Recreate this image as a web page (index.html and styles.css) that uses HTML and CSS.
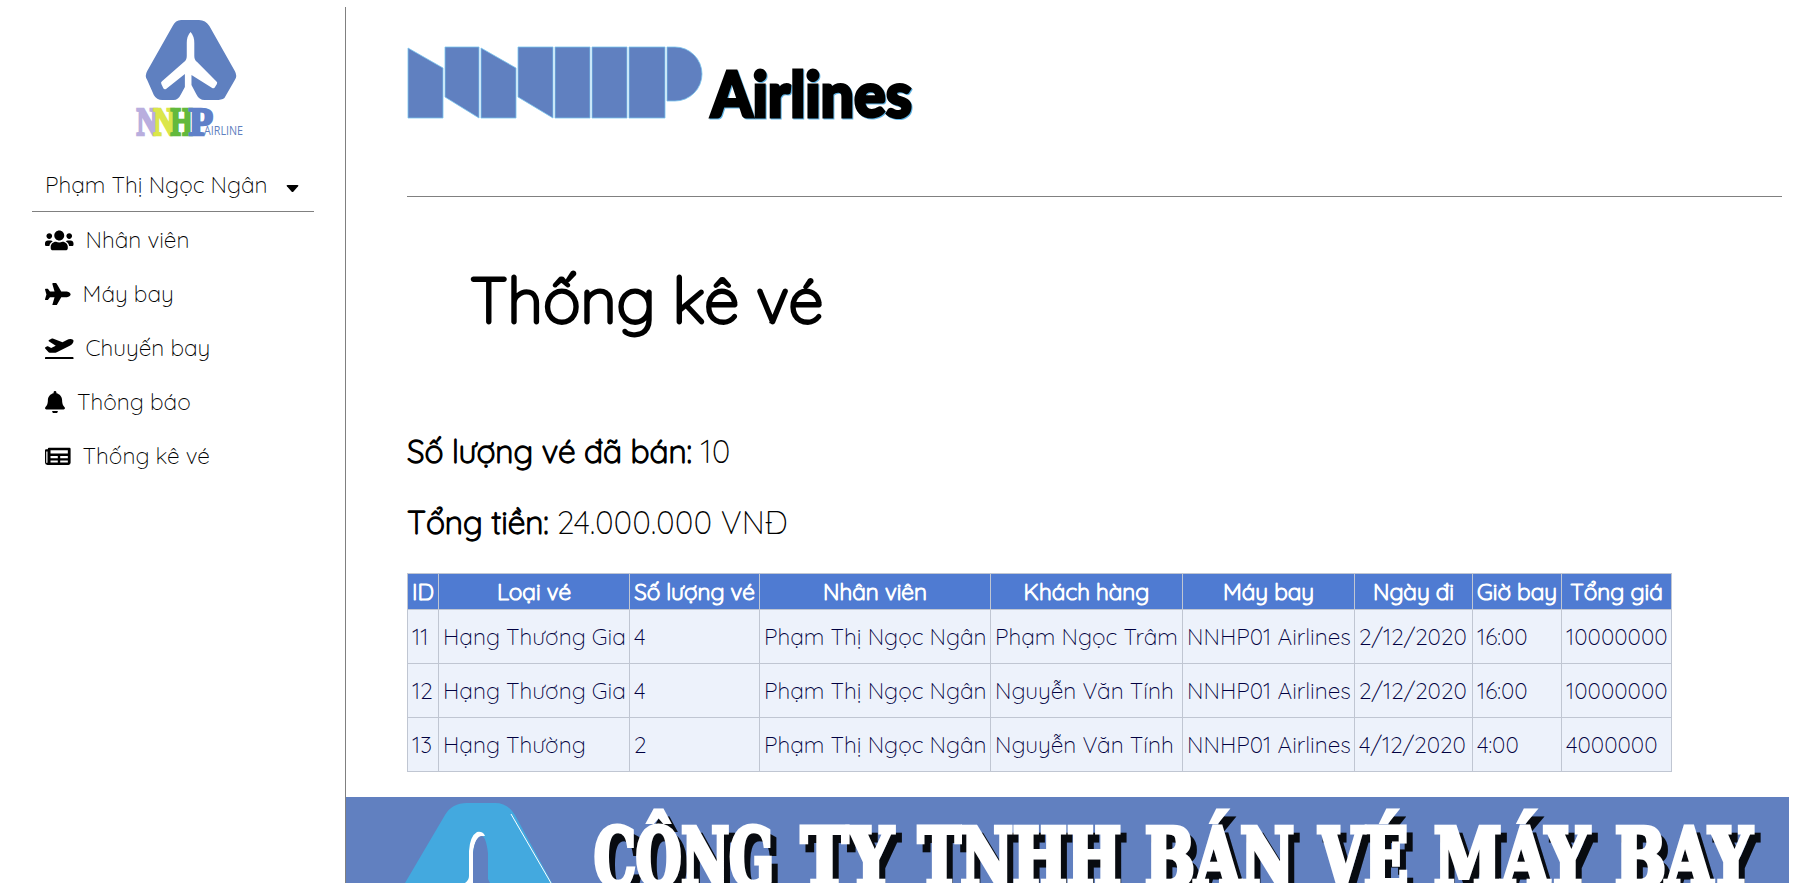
FILE: index.html
```html
<!DOCTYPE html>
<html lang="vi">
<head>
<meta charset="utf-8">
<title>NNHP Airlines</title>
<link rel="stylesheet" href="styles.css">
</head>
<body>
<div class="layout">
  <aside class="sidebar">
    <svg class="logo" viewBox="0 0 120 125" role="img" aria-label="NNHP Airline">
      <path transform="translate(.9 0) scale(.942 1)" fill="#5f80c0" d="M48 5h19q7 0 11 6l27 45q3 5 0 9l-11 18q-3 2-9 2h-12q-6 0-9-6l-5-9V60l22 13q2 1 3-1l2-3q1-2-1-3L65 47q-3-2-3-6V28q0-7-4-11q-4 4-4 11v13q0 4-3 6L28 66q-2 1-1 3l2 4q1 2 3 1l20-15v13l-4 7q-3 6-8 6H28q-6 0-9-5L12 65q-3-4 0-9l27-45q3-6 9-6z"/>
      <g class="logo-word">
        <text x="1.500" y="119.500" textLength="21" lengthAdjust="spacingAndGlyphs" fill="#b9aede" stroke="#b9aede">N</text>
        <text x="18.500" y="119.500" textLength="21" lengthAdjust="spacingAndGlyphs" fill="#dbe64a" stroke="#dbe64a">N</text>
        <text x="35.500" y="119.500" textLength="22" lengthAdjust="spacingAndGlyphs" fill="#63b93c" stroke="#63b93c">H</text>
        <text x="54" y="119.500" textLength="24" lengthAdjust="spacingAndGlyphs" fill="#5f80c8" stroke="#5f80c8">P</text>
      </g>
      <text class="logo-sub" x="69" y="119.700" textLength="39" lengthAdjust="spacingAndGlyphs">AIRLINE</text>
    </svg>
    <div class="user"><span>Phạm Thị Ngọc Ngân</span><svg class="caret" viewBox="0 0 12 7"><path d="M1 0h10q1.600 0 .6 1.300L7 6.400q-1 1-2 0L.4 1.300Q-.6 0 1 0z"/></svg></div>
    <nav class="menu">
      <a class="item"><svg class="icon wide" viewBox="0 0 640 512"><path d="M96 224c35.300 0 64-28.700 64-64s-28.700-64-64-64-64 28.700-64 64 28.700 64 64 64zm448 0c35.300 0 64-28.700 64-64s-28.700-64-64-64-64 28.700-64 64 28.700 64 64 64zm32 32h-64c-17.600 0-33.500 7.100-45.100 18.600 40.300 22.100 68.900 62 75.100 109.400h66c17.700 0 32-14.300 32-32v-32c0-35.300-28.700-64-64-64zm-256 0c61.900 0 112-50.100 112-112S381.900 32 320 32 208 82.100 208 144s50.100 112 112 112zm76.800 32h-8.300c-20.800 10-43.900 16-68.500 16s-47.600-6-68.500-16h-8.300C179.600 288 128 339.600 128 403.200V432c0 26.500 21.500 48 48 48h288c26.500 0 48-21.500 48-48v-28.800c0-63.600-51.600-115.200-115.200-115.200zm-223.700-13.400C161.500 263.100 145.600 256 128 256H64c-35.300 0-64 28.700-64 64v32c0 17.700 14.300 32 32 32h65.900c6.300-47.400 34.900-87.300 75.200-109.400z"/></svg><span>Nhân viên</span></a>
      <a class="item"><svg class="icon mid" viewBox="0 0 576 512"><path d="M480 192H365.710L260.610 8.060A16.014 16.014 0 0 0 246.710 0h-65.500c-10.630 0-18.300 10.170-15.380 20.390L214.860 192H112l-43.200-57.600c-3.020-4.030-7.770-6.400-12.800-6.400H16.010C5.600 128-2.040 137.780.490 147.880L32 256 .490 364.120C-2.040 374.220 5.600 384 16.010 384H56c5.040 0 9.780-2.370 12.800-6.400L112 320h102.860l-49.030 171.600c-2.920 10.220 4.750 20.400 15.380 20.400h65.500c5.740 0 11.040-3.080 13.890-8.060L365.710 320H480c35.350 0 96-28.650 96-64s-60.650-64-96-64z"/></svg><span>Máy bay</span></a>
      <a class="item"><svg class="icon wide" viewBox="0 0 640 512"><path d="M624 448H16c-8.840 0-16 7.160-16 16v32c0 8.840 7.160 16 16 16h608c8.840 0 16-7.160 16-16v-32c0-8.840-7.160-16-16-16zM80.550 341.270c6.280 6.840 15.100 10.720 24.330 10.710l130.540-.18a65.620 65.620 0 0 0 29.640-7.120l290.960-147.650c26.740-13.570 50.710-32.940 67.020-58.310 18.310-28.480 20.300-49.090 13.070-63.650-7.210-14.570-24.740-25.270-58.250-27.450-29.850-1.940-59.540 5.920-86.280 19.480l-98.510 49.990-218.700-82.060a17.799 17.799 0 0 0-18-1.110L90.620 67.290c-10.670 5.410-13.250 19.650-5.170 28.530l156.220 98.100-103.210 52.380-72.350-36.470a17.804 17.804 0 0 0-16.070.02L9.910 230.220c-10.440 5.300-13.190 19.120-5.570 28.080l76.210 82.970z"/></svg><span>Chuyến bay</span></a>
      <a class="item"><svg class="icon slim" viewBox="0 0 448 512"><path d="M224 512c35.320 0 63.970-28.650 63.970-64H160.030c0 35.350 28.650 64 63.970 64zm215.390-149.710c-19.320-20.760-55.470-51.990-55.470-154.290 0-77.700-54.480-139.900-127.940-155.160V32c0-17.670-14.320-32-31.980-32s-31.980 14.330-31.980 32v20.840C118.560 68.100 64.080 130.300 64.080 208c0 102.300-36.150 133.530-55.470 154.290-6 6.450-8.660 14.160-8.610 21.710.11 16.400 12.980 32 32.100 32h383.800c19.120 0 32-15.600 32.100-32 .05-7.550-2.610-15.270-8.610-21.710z"/></svg><span>Thông báo</span></a>
      <a class="item"><svg class="icon mid" viewBox="0 0 576 512"><path fill-rule="evenodd" d="M88 64h464q24 0 24 24v312q0 48-48 48H56q-56 0-56-56V120q0-24 24-24h40v-8q0-24 24-24zM28 144v244q0 16 14 16t14-16V144zM124 116v76h390v-76zM124 248v48h164v-48zM342 248v48h172v-48zM124 348v48h164v-48zM342 348v48h172v-48z"/></svg><span>Thống kê vé</span></a>
    </nav>
  </aside>
  <main class="main">
    <header class="banner">
      <svg class="brand" viewBox="0 0 520 90" role="img" aria-label="NNHP Airlines">
        <g class="stripes">
          <path d="M1 7l35 20v50H1z"/><path d="M38 6h34v71L38 56z"/><path d="M74 7l35 20v50H74z"/><path d="M111 6h35v71l-35-21z"/>
          <path d="M148 6h35v71h-35z"/><path d="M185 6h35v71h-35z"/><path d="M222 6h36v71h-36z"/><path d="M260 6h8a27 27 0 0 1 0 54h-8z"/>
        </g>
        <text class="brand-text" x="304" y="75.500" textLength="201" lengthAdjust="spacingAndGlyphs">Airlines</text>
      </svg>
    </header>
    <section class="content">
      <h1 class="title">Thống kê vé</h1>
      <p class="stat"><b>Số lượng vé đã bán:</b> 10</p>
      <p class="stat"><b>Tổng tiền:</b> 24.000.000 VNĐ</p>
      <table class="tickets">
        <colgroup><col class="c1"><col class="c2"><col class="c3"><col class="c4"><col class="c5"><col class="c6"><col class="c7"><col class="c8"><col class="c9"></colgroup>
        <thead><tr><th>ID</th><th>Loại vé</th><th>Số lượng vé</th><th>Nhân viên</th><th>Khách hàng</th><th>Máy bay</th><th>Ngày đi</th><th>Giờ bay</th><th>Tổng giá</th></tr></thead>
        <tbody>
          <tr><td>11</td><td>Hạng Thương Gia</td><td>4</td><td>Phạm Thị Ngọc Ngân</td><td>Phạm Ngọc Trâm</td><td>NNHP01 Airlines</td><td>2/12/2020</td><td>16:00</td><td>10000000</td></tr>
          <tr><td>12</td><td>Hạng Thương Gia</td><td>4</td><td>Phạm Thị Ngọc Ngân</td><td>Nguyễn Văn Tính</td><td>NNHP01 Airlines</td><td>2/12/2020</td><td>16:00</td><td>10000000</td></tr>
          <tr><td>13</td><td>Hạng Thường</td><td>2</td><td>Phạm Thị Ngọc Ngân</td><td>Nguyễn Văn Tính</td><td>NNHP01 Airlines</td><td>4/12/2020</td><td>4:00</td><td>4000000</td></tr>
        </tbody>
      </table>
    </section>
    <footer class="footer">
      <svg class="footer-art" viewBox="0 0 1443 86">
        <path fill="#43a9df" d="M59 86L99 18q7-12 22-12h28q13 0 20 12l37 68z"/>
        <path fill="none" stroke="#fff" stroke-width="1" d="M165 17l40 69"/>
        <path fill="#fff" d="M119 86q4-3 4-7V54q1-15 8-19q6-1 8 4q-10-1-12 17v30z"/>
        <path fill="#6180c0" d="M127 86V56q2-17 9-17q4 1 6 17v26l2 4z"/>
        <g class="foot-text">
          <text x="248" y="89" textLength="180" lengthAdjust="spacingAndGlyphs">CÔNG</text>
          <text x="455" y="89" textLength="92" lengthAdjust="spacingAndGlyphs">TY</text>
          <text x="572" y="89" textLength="203" lengthAdjust="spacingAndGlyphs">TNHH</text>
          <text x="799" y="89" textLength="149" lengthAdjust="spacingAndGlyphs">BÁN</text>
          <text x="973" y="89" textLength="89" lengthAdjust="spacingAndGlyphs">VÉ</text>
          <text x="1088" y="89" textLength="155" lengthAdjust="spacingAndGlyphs">MÁY</text>
          <text x="1269" y="89" textLength="137" lengthAdjust="spacingAndGlyphs">BAY</text>
        </g>
      </svg>
    </footer>
  </main>
</div>
</body>
</html>
```

FILE: styles.css
```css
* { box-sizing: border-box; }
body { margin: 0; height: 883px; overflow: hidden; background: #fff; color: #000; font: 300 22.700px/30px Quicksand, Lato, sans-serif; }
.layout { display: flex; height: 883px; padding-top: 7px; }
.sidebar { width: 345px; padding: 8px 31px 0 32px; flex: none; }
.logo { display: block; width: 120px; height: 125px; margin-left: 103px; }
.logo-word text { font: bold 40px "Liberation Serif", serif; stroke-width: 2.500; }
.logo-sub { font: 12.500px "Open Sans", sans-serif; fill: #5f80c0; }
.user { height: 72px; padding: 30px 15px 0 13px; display: flex; justify-content: space-between; border-bottom: 1px solid #808080; }
.caret { width: 13px; height: 7px; margin-top: 15px; }
.menu { padding-top: 1px; }
.item { display: flex; align-items: center; height: 54px; padding-left: 13px; gap: 12px; }
.icon { height: 22.800px; flex: none; }
.wide { width: 28.500px; } .mid { width: 25.600px; } .slim { width: 20px; }
.main { width: 1444px; border-left: 1px solid #808080; display: flex; flex-direction: column; }
.banner { height: 190px; margin: 0 7px 0 61px; border-bottom: 1px solid #808080; padding-top: 34px; }
.brand { display: block; width: 520px; height: 90px; }
.stripes { fill: #6080c0; stroke: #79c4ee; stroke-width: .8; }
.brand-text { font: 900 63px Lato, sans-serif; stroke: #000; stroke-width: 3; paint-order: stroke; filter: drop-shadow(1.500px 1.500px 0 #5fb4e6); }
.content { padding-left: 61px; height: 600px; }
.title { margin: 63px 0 0 63px; font-size: 63px; line-height: 80px; font-weight: 300; -webkit-text-stroke: 2.900px #000; }
.stat { margin: 0; font-size: 31.800px; line-height: 40px; }
.title + .stat { margin-top: 91px; }
.stat + .stat { margin-top: 31px; }
.stat b { font-weight: 300; letter-spacing: -.05px; -webkit-text-stroke: 1.300px #000; }
.tickets { margin-top: 31px; width: 1265px; table-layout: fixed; border-collapse: collapse; color: #000040; white-space: nowrap; }
.tickets th, .tickets td { border: 1px solid #c0c6d2; padding: 0 0 0 4px; }
.tickets th { height: 36px; background: #4f7bd2; color: #fff; font-weight: 300; -webkit-text-stroke: 1.200px #fff; padding: 0; }
.tickets td { height: 54px; background: #edf2fb; }
.c1 { width: 31px; } .c2 { width: 191px; } .c3 { width: 130px; } .c4 { width: 231px; } .c5 { width: 192px; } .c6 { width: 172px; } .c7 { width: 118px; } .c8 { width: 89px; } .c9 { width: 110px; }
.footer { height: 86px; background: #6180c0; }
.footer-art { display: block; width: 1443px; height: 86px; }
.foot-text { font: bold 80px "DejaVu Serif Condensed", "DejaVu Serif", serif; fill: #fff; stroke: #fff; stroke-width: 5; filter: drop-shadow(6.500px 8px 0 #080b10); }
```
